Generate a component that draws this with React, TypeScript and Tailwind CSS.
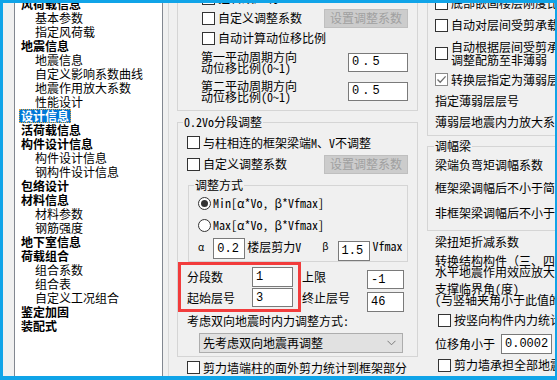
import type { ReactNode } from "react";

const tree: [string, number][] = [
  ["风荷载信息", 0],
  ["基本参数", 1],
  ["指定风荷载", 1],
  ["地震信息", 0],
  ["地震信息", 1],
  ["自定义影响系数曲线", 1],
  ["地震作用放大系数", 1],
  ["性能设计", 1],
  ["设计信息", 0],
  ["活荷载信息", 0],
  ["构件设计信息", 0],
  ["构件设计信息", 1],
  ["钢构件设计信息", 1],
  ["包络设计", 0],
  ["材料信息", 0],
  ["材料参数", 1],
  ["钢筋强度", 1],
  ["地下室信息", 0],
  ["荷载组合", 0],
  ["组合系数", 1],
  ["组合表", 1],
  ["自定义工况组合", 1],
  ["鉴定加固", 0],
  ["装配式", 0],
];

function Check({ checked = false }: { checked?: boolean }) {
  return (
    <span
      className={`w-[13px] h-[13px] shrink-0 border bg-white flex items-center justify-center ${
        checked ? "border-[#8a8a8a]" : "border-[#333333]"
      }`}
    >
      {checked && (
        <svg width="11" height="11" viewBox="0 0 11 11">
          <path d="M1.5 5.5 L4.2 8.3 L9.6 2.4" fill="none" stroke="#6f6f6f" strokeWidth="1.3" />
        </svg>
      )}
    </span>
  );
}

function Radio({ on = false }: { on?: boolean }) {
  return (
    <span className="w-[13px] h-[13px] shrink-0 rounded-full border border-[#333333] bg-white flex items-center justify-center">
      {on && <span className="w-[7px] h-[7px] rounded-full bg-[#333333]" />}
    </span>
  );
}

function Field({ v, className }: { v: string; className: string }) {
  return (
    <div
      className={`shrink-0 bg-white border border-[#7a7a7a] flex items-center pl-[3px] font-['Liberation_Mono',monospace] text-[12px] leading-[14px] ${className}`}
    >
      {v}
    </div>
  );
}

function DisabledBtn() {
  return (
    <div className="ml-auto w-[84px] h-[19px] shrink-0 bg-[#cccccc] border border-[#bfbfbf] text-[#a0a0a0] flex items-center justify-center">
      设置调整系数
    </div>
  );
}

function CheckRow({ children, className, checked }: { children: ReactNode; className: string; checked?: boolean }) {
  return (
    <div className={`flex items-center gap-[3px] whitespace-nowrap ${className}`}>
      <Check checked={checked} />
      {children}
    </div>
  );
}

export default function App() {
  return (
    <div className="w-[557px] h-[380px] flex overflow-hidden border-t-[3px] border-l-[3px] border-r-[2px] border-b-[4px] border-[#10a4e8] bg-[#f0f0f0] text-[12px] leading-[14px] text-black font-['Noto_Sans_Mono_CJK_SC','Noto_Sans_CJK_SC',sans-serif]">
      {/* Tree */}
      <div className="ml-[11px] w-[149px] shrink-0 bg-white border-x border-[#828790] overflow-hidden">
        <div className="mt-[-6px] flex flex-col">
          {tree.map(([t, lvl], i) =>
            i === 8 ? (
              <div key={i} className="h-[14px] pl-[4px] flex">
                <span className="px-[2px] bg-[#0078d7] text-white font-bold outline-1 outline-dotted outline-[#e6a23c] -outline-offset-1">
                  {t}
                </span>
              </div>
            ) : (
              <div
                key={i}
                className={`h-[14px] whitespace-nowrap ${lvl === 0 ? "pl-[6px] font-bold" : "pl-[20px]"}`}
              >
                {t}
              </div>
            )
          )}
        </div>
      </div>

      <div className="ml-[5px] w-px shrink-0 bg-[#d9d9d9]" />

      {/* Left column */}
      <div className="ml-[8px] w-[241px] shrink-0 flex flex-col">
        <div className="mt-[-15px] border-x border-b border-[#d5d5d5] pl-[24px] pr-[9px] pb-[9px] flex flex-col">
          <CheckRow className="h-[20px]">
            <span>扭转效应明显</span>
          </CheckRow>
          <CheckRow className="h-[20px]">
            <span>自定义调整系数</span>
            <DisabledBtn />
          </CheckRow>
          <CheckRow className="h-[20px]">
            <span>自动计算动位移比例</span>
          </CheckRow>
          <div className="mt-[4px] h-[20px] flex items-center justify-between">
            <div className="-ml-[1px] leading-[11px] whitespace-nowrap">
              第一平动周期方向
              <br />
              动位移比例(0~1)
            </div>
            <Field v="0.5" className="w-[60px] h-[19px] tracking-[3px]" />
          </div>
          <div className="mt-[9px] h-[20px] flex items-center justify-between">
            <div className="-ml-[1px] leading-[11px] whitespace-nowrap">
              第二平动周期方向
              <br />
              动位移比例(0~1)
            </div>
            <Field v="0.5" className="w-[60px] h-[19px] tracking-[3px]" />
          </div>
        </div>

        <fieldset className="mt-[4px] border border-[#d5d5d5] pb-[3px] flex flex-col">
          <legend className="ml-[5px] px-[1px] leading-[14px]">0.2Vo分段调整</legend>
          <CheckRow className="mt-[3px] h-[21px] pl-[9px]">
            <span>与柱相连的框架梁端M、V不调整</span>
          </CheckRow>
          <CheckRow className="h-[22px] pl-[9px] pr-[9px]">
            <span>自定义调整系数</span>
            <DisabledBtn />
          </CheckRow>

          <fieldset className="mt-[3px] ml-[10px] mr-[9px] border border-[#d5d5d5] flex flex-col">
            <legend className="ml-[5px] px-[1px] leading-[14px]">调整方式</legend>
            <div className="h-[22px] pl-[9px] flex items-center gap-[2px] whitespace-nowrap">
              <Radio on />
              <span>Min[α*Vo, β*Vfmax]</span>
            </div>
            <div className="h-[22px] pl-[9px] flex items-center gap-[2px] whitespace-nowrap">
              <Radio />
              <span>Max[α*Vo, β*Vfmax]</span>
            </div>
            <div className="h-[25px] pl-[9px] flex items-start whitespace-nowrap">
              <span className="mt-[4px] text-[10px]">α</span>
              <Field v="0.2" className="ml-[9px] mt-[2px] w-[32px] h-[21px]" />
              <span className="ml-[2px] mt-[4px]">楼层剪力V</span>
              <span className="ml-[21px] mt-[3px] text-[10px]">β</span>
              <Field v="1.5" className="ml-[9px] mt-[5px] w-[32px] h-[20px]" />
              <span className="ml-[3px] mt-[3px]">Vfmax</span>
            </div>
          </fieldset>

          <div className="flex h-[50px]">
            <div className="w-[123px] shrink-0 border-[3px] border-[#f23c3c] pt-[2px] pl-[6px] flex flex-col">
              <div className="h-[20px] flex items-center">
                <span className="w-[65px]">分段数</span>
                <Field v="1" className="w-[41px] h-[20px]" />
              </div>
              <div className="h-[21px] flex items-center">
                <span className="w-[65px]">起始层号</span>
                <Field v="3" className="w-[41px] h-[19px]" />
              </div>
            </div>
            <div className="ml-[1px] pt-[8px] flex flex-col">
              <div className="h-[20px] flex items-start">
                <span className="w-[65px]">上限</span>
                <Field v="-1" className="w-[37px] h-[19px]" />
              </div>
              <div className="h-[22px] flex items-start">
                <span className="mt-[1px] w-[65px]">终止层号</span>
                <Field v="46" className="mt-[2px] w-[37px] h-[20px]" />
              </div>
            </div>
          </div>

          <div className="h-[18px] pl-[9px] flex items-center whitespace-nowrap">考虑双向地震时内力调整方式:</div>
          <div className="mt-[3px] ml-[21px] w-[204px] h-[20px] bg-[#e1e1e1] border border-[#adadad] pl-[3px] pr-[6px] flex items-center justify-between">
            <span>先考虑双向地震再调整</span>
            <svg width="9" height="6" viewBox="0 0 9 6">
              <path d="M0.5 0.8 L4.5 4.8 L8.5 0.8" fill="none" stroke="#7a7a7a" strokeWidth="1" />
            </svg>
          </div>
        </fieldset>

        <CheckRow className="mt-[2px] h-[20px] pl-[10px]">
          <span>剪力墙端柱的面外剪力统计到框架部分</span>
        </CheckRow>
      </div>

      {/* Right column */}
      <div className="flex-1 min-w-0 overflow-hidden flex flex-col">
        <div className="mt-[-11px] ml-[9px] w-[220px] border-l border-b border-[#d5d5d5] pl-[7px] pb-[2px] flex flex-col">
          <CheckRow className="h-[22px]">
            <span>底部嵌固楼层刚度比执行《高规》3.5.2-2</span>
          </CheckRow>
          <CheckRow className="h-[22px]">
            <span>自动对层间受剪承载力突变形成的薄弱层放大调整</span>
          </CheckRow>
          <CheckRow className="h-[32px] pt-[2px]">
            <span className="leading-[13px]">
              自动根据层间受剪承载力比值
              <br />
              调整配筋至非薄弱
            </span>
          </CheckRow>
          <CheckRow className="h-[23px]" checked>
            <span>转换层指定为薄弱层</span>
          </CheckRow>
          <div className="h-[20px] flex items-center whitespace-nowrap">指定薄弱层层号</div>
          <div className="h-[22px] flex items-center whitespace-nowrap">薄弱层地震内力放大系数</div>
        </div>

        <fieldset className="mt-[3px] ml-[9px] w-[220px] border border-r-0 border-[#d5d5d5] pl-[7px] pb-[7px] flex flex-col">
          <legend className="ml-[-1px] px-[1px] leading-[14px]">调幅梁</legend>
          <div className="mt-[1px] h-[22px] flex items-center whitespace-nowrap">梁端负弯矩调幅系数</div>
          <div className="h-[23px] flex items-center whitespace-nowrap">框架梁调幅后不小于简支梁跨中弯矩</div>
          <div className="mt-[4px] h-[20px] flex items-center whitespace-nowrap">非框架梁调幅后不小于简支梁跨中弯矩</div>
        </fieldset>

        <div className="pl-[17px] flex flex-col whitespace-nowrap">
          <div className="mt-[2px] h-[18px] flex items-center">梁扭矩折减系数</div>
          <div className="mt-[4px] leading-[11px]">
            转换结构构件（三、四级）
            <br />
            水平地震作用效应放大系数
          </div>
          <div className="mt-[6px] leading-[11px]">
            支撑临界角(度)
            <br />
            (与竖轴夹角小于此值的按柱处理)
          </div>
          <CheckRow className="mt-[5px] h-[20px] pl-[3px]">
            <span>按竖向构件内力统计层地震剪力</span>
          </CheckRow>
          <div className="mt-[3px] h-[22px] flex items-center">
            <span className="w-[66px]">位移角小于</span>
            <Field v="0.0002" className="w-[51px] h-[20px]" />
          </div>
          <CheckRow className="h-[20px] pl-[3px]">
            <span>剪力墙承担全部地震剪力</span>
          </CheckRow>
        </div>
      </div>
    </div>
  );
}
